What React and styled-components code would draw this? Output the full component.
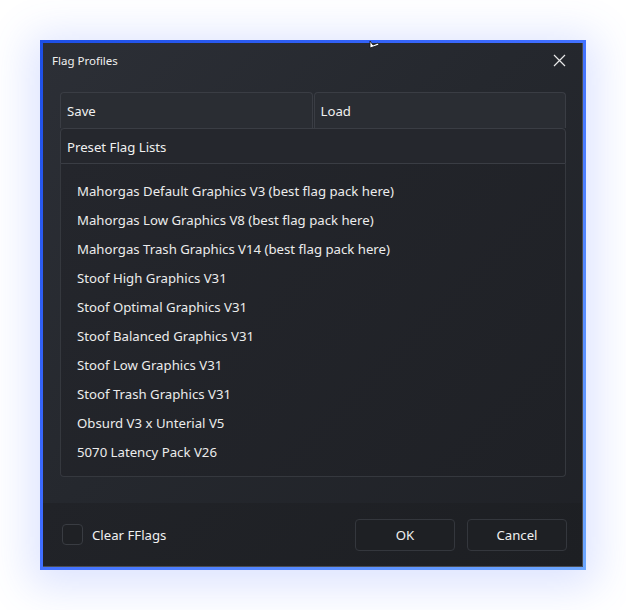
import React from 'react'
import styled, { createGlobalStyle } from 'styled-components'

const Global = createGlobalStyle`
  html, body { margin: 0; padding: 0; background: #ffffff; }
  body { font-family: "Noto Sans", "Open Sans", sans-serif; }
`

const Page = styled.div`
  width: 626px;
  height: 610px;
  padding: 40px 0 0 40px;
  box-sizing: border-box;
`

const Frame = styled.div`
  position: relative;
  width: 546px;
  height: 530px;
  padding: 3px;
  box-sizing: border-box;
  background: linear-gradient(135deg, #1d4fe6 0%, #3e6cff 45%, #6ea8ff 100%);
  box-shadow: 0 6px 40px 10px rgba(80, 115, 255, 0.2);
`

const Window = styled.div`
  height: 100%;
  display: flex;
  flex-direction: column;
  box-sizing: border-box;
  border-right: 1px solid #4a4d55;
  border-bottom: 1px solid #4a4d55;
  background: linear-gradient(135deg, #2c2f36 0%, #25282e 45%, #1f2126 100%);
  color: #f0f0f0;
`

const TitleBar = styled.div`
  height: 35px;
  display: flex;
  align-items: center;
  justify-content: space-between;
  padding: 0 14px 0 9px;
  font-size: 11.5px;
`

const Close = styled.button`
  width: 18px;
  height: 18px;
  padding: 0;
  border: none;
  background: none;
  display: flex;
  align-items: center;
  justify-content: center;
  color: #e8e8e8;
`

const Body = styled.div`
  flex: 1;
  display: flex;
  flex-direction: column;
  padding: 14px 16px 26px 17px;
  min-height: 0;
`

const Tabs = styled.div`
  display: grid;
  grid-template-columns: 1fr 1fr;
  gap: 1px;
`

const Tab = styled.div`
  height: 36px;
  box-sizing: border-box;
  display: flex;
  align-items: center;
  padding-left: 6px;
  border: 1px solid #3a3d44;
  border-bottom: none;
  border-radius: 4px 4px 0 0;
  background: #2a2d33;
  font-size: 13.2px;
`

const Section = styled.div`
  height: 36px;
  box-sizing: border-box;
  display: flex;
  align-items: center;
  padding: 1px 0 0 6px;
  border: 1px solid #3a3d44;
  border-radius: 4px 4px 0 0;
  background: #25272d;
  font-size: 13.2px;
`

const List = styled.ul`
  flex: 1;
  margin: 0;
  list-style: none;
  padding: 12px 0 0 16px;
  border: 1px solid #35383e;
  border-top: none;
  border-radius: 0 0 4px 4px;
  background: linear-gradient(135deg, #24262c 0%, #1f2126 100%);
`

const Item = styled.li`
  height: 29px;
  display: flex;
  align-items: center;
  font-size: 13.2px;
  color: #ececec;
`

const Footer = styled.div`
  height: 63px;
  display: flex;
  align-items: center;
  padding: 0 15px 0 19px;
  background: linear-gradient(135deg, #212328 0%, #1d1f23 100%);
`

const Check = styled.label`
  display: flex;
  align-items: center;
  gap: 9px;
  font-size: 13.2px;
  flex: 1;
`

const Box = styled.span`
  width: 21px;
  height: 21px;
  box-sizing: border-box;
  border: 1px solid #393c42;
  border-radius: 4px;
  background: #1f2125;
`

const Buttons = styled.div`
  display: flex;
  gap: 12px;
`

const Button = styled.button`
  width: 100px;
  height: 32px;
  border: 1px solid #34373d;
  border-radius: 4px;
  background: #1e2024;
  color: #f0f0f0;
  font-family: inherit;
  font-size: 13.2px;
`

const Cursor = styled.svg`
  position: absolute;
  left: 327px;
  top: 0px;
`

const presets = [
  'Mahorgas Default Graphics V3 (best flag pack here)',
  'Mahorgas Low Graphics V8 (best flag pack here)',
  'Mahorgas Trash Graphics V14 (best flag pack here)',
  'Stoof High Graphics V31',
  'Stoof Optimal Graphics V31',
  'Stoof Balanced Graphics V31',
  'Stoof Low Graphics V31',
  'Stoof Trash Graphics V31',
  'Obsurd V3 x Unterial V5',
  '5070 Latency Pack V26',
]

export default function App() {
  return (
    <Page>
      <Global />
      <Frame>
        <Window>
          <TitleBar>
            <span>Flag Profiles</span>
            <Close>
              <svg width="13" height="13" viewBox="0 0 13 13">
                <path d="M1 1L12 12M12 1L1 12" stroke="currentColor" strokeWidth="1.2" />
              </svg>
            </Close>
          </TitleBar>
          <Body>
            <Tabs>
              <Tab>Save</Tab>
              <Tab>Load</Tab>
            </Tabs>
            <Section>Preset Flag Lists</Section>
            <List>
              {presets.map((p) => (
                <Item key={p}>{p}</Item>
              ))}
            </List>
          </Body>
          <Footer>
            <Check>
              <Box />
              Clear FFlags
            </Check>
            <Buttons>
              <Button>OK</Button>
              <Button>Cancel</Button>
            </Buttons>
          </Footer>
        </Window>
        <Cursor width="14" height="10" viewBox="0 0 14 10">
          <path d="M3 1L3 8L12 5L11 3L6 5Z" fill="#fff" stroke="#111" strokeWidth="0.8" />
        </Cursor>
      </Frame>
    </Page>
  )
}
